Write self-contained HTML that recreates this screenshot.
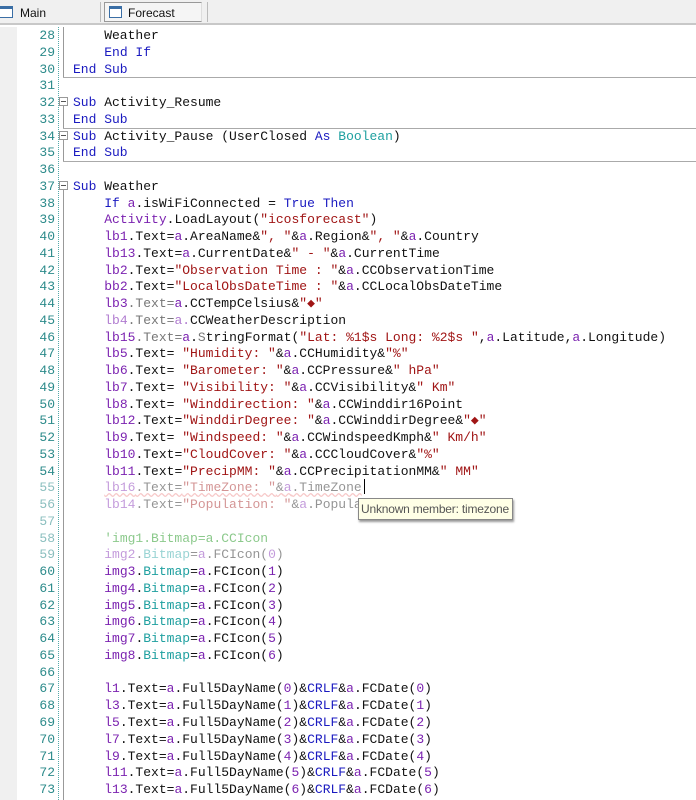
<!DOCTYPE html>
<html><head><meta charset="utf-8"><style>
*{margin:0;padding:0;box-sizing:border-box}
body{width:696px;height:800px;overflow:hidden;background:#fff;font-family:"Liberation Mono",monospace;font-size:13px;position:relative}
#tabs{position:absolute;left:0;top:0;width:696px;height:25px;background:#f0f0f0;border-bottom:2px solid #c8c8c8;font-family:"Liberation Sans",sans-serif;font-size:12px;color:#111}
.ic{position:absolute;width:13px;height:12px;border:1px solid #3a6ea5;border-top:3px solid #3a6ea5;background:#fff}
#gut{position:absolute;left:0;top:27px;width:17px;height:773px;background:#f0f0f0}
#dot{position:absolute;left:58px;top:27px;height:773px;border-left:1px dotted #5aa;}
.ln{position:absolute;left:17px;width:38px;text-align:right;color:#2b8a8a;height:17px;line-height:17px}
.cd{position:absolute;left:73px;white-space:pre;height:17px;line-height:17px;color:#111}
.k{color:#1a1ac0}.v{color:#7b22b0}.s{color:#a01515}.t{color:#1fa0a0}.g{color:#777}
.f{opacity:.45}
.fold{position:absolute;left:59px;width:9px;height:9px;border:1px solid #999;background:#fff}
.fold:after{content:"";position:absolute;left:1px;top:3px;width:5px;height:1px;background:#555}
.vl{position:absolute;left:63px;border-left:1px solid #999}
.hl{position:absolute;left:63px;right:0;border-top:1px solid #aaa}
</style></head><body>
<div id="tabs">
<div class="ic" style="left:0;top:6px;border-left:none"></div>
<div style="position:absolute;left:20px;top:6px">Main</div>
<div style="position:absolute;left:100px;top:2px;height:20px;border-left:1px solid #bbb"></div>
<div style="position:absolute;left:104px;top:2px;width:98px;height:20px;border:1px solid #999;border-right-color:#ddd;background:#f5f5f5"></div>
<div class="ic" style="left:109px;top:6px"></div>
<div style="position:absolute;left:128px;top:6px">Forecast</div>
<div style="position:absolute;left:207px;top:2px;height:20px;border-left:1px solid #bbb"></div>
</div>
<div id="gut"></div>
<div id="dot"></div>
<div class="vl" style="top:27px;height:50px"></div>
<div class="hl" style="top:77px"></div>
<div class="vl" style="top:102px;height:26px"></div>
<div class="hl" style="top:128px"></div>
<div class="vl" style="top:136px;height:26px"></div>
<div class="hl" style="top:161px"></div>
<div class="vl" style="top:190px;height:610px"></div>
<div class="fold" style="top:97px"></div>
<div class="fold" style="top:131px"></div>
<div class="fold" style="top:181px"></div>
<div id="code"></div>
<div style="position:absolute;left:358px;top:498px;width:155px;height:22px;border:1px solid #888;background:#ffffe6;font-family:'Liberation Sans',sans-serif;font-size:12px;letter-spacing:-0.2px;color:#555;line-height:20px;padding-left:2px;box-shadow:1px 2px 2px #999;white-space:nowrap;overflow:hidden">Unknown member: timezone</div>
<div style="position:absolute;left:364px;top:479px;height:15px;border-left:1px solid #000"></div>
<script>
var L={
28:'    Weather',
29:'    <span class=k>End If</span>',
30:'<span class=k>End Sub</span>',
31:'',
32:'<span class=k>Sub</span> Activity_Resume',
33:'<span class=k>End Sub</span>',
34:'<span class=k>Sub</span> Activity_Pause (UserClosed <span class=k>As</span> <span class=t>Boolean</span>)',
35:'<span class=k>End Sub</span>',
36:'',
37:'<span class=k>Sub</span> Weather',
38:'    <span class=k>If</span> <span class=v>a</span>.isWiFiConnected = <span class=k>True Then</span>',
39:'    <span class=v>Activity</span>.LoadLayout(<span class=s>"icosforecast"</span>)',
40:'    <span class=v>lb1</span>.Text=<span class=v>a</span>.AreaName&amp;<span class=s>", "</span>&amp;<span class=v>a</span>.Region&amp;<span class=s>", "</span>&amp;<span class=v>a</span>.Country',
41:'    <span class=v>lb13</span>.Text=<span class=v>a</span>.CurrentDate&amp;<span class=s>" - "</span>&amp;<span class=v>a</span>.CurrentTime',
42:'    <span class=v>lb2</span>.Text=<span class=s>"Observation Time : "</span>&amp;<span class=v>a</span>.CCObservationTime',
43:'    <span class=v>bb2</span>.Text=<span class=s>"LocalObsDateTime : "</span>&amp;<span class=v>a</span>.CCLocalObsDateTime',
44:'    <span class=v>lb3</span><span class=g>.Text=</span><span class=v>a</span>.CCTempCelsius&amp;<span class=s>"\u25c6"</span>',
45:'    <span class=v style="opacity:.6">lb4</span><span class=g>.Text=</span><span class=v style="opacity:.6">a.</span>CCWeatherDescription',
46:'    <span class=v>lb15</span><span class=g>.Text=</span><span class=v>a</span>.<span class=g>S</span>tringFormat(<span class=s>"Lat: %1$s Long: %2$s "</span>,<span class=v>a</span>.Latitude,<span class=v>a</span>.Longitude)',
47:'    <span class=v>lb5</span>.Text= <span class=s>"Humidity: "</span>&amp;<span class=v>a</span>.CCHumidity&amp;<span class=s>"%"</span>',
48:'    <span class=v>lb6</span>.Text= <span class=s>"Barometer: "</span>&amp;<span class=v>a</span>.CCPressure&amp;<span class=s>" hPa"</span>',
49:'    <span class=v>lb7</span>.Text= <span class=s>"Visibility: "</span>&amp;<span class=v>a</span>.CCVisibility&amp;<span class=s>" Km"</span>',
50:'    <span class=v>lb8</span>.Text= <span class=s>"Winddirection: "</span>&amp;<span class=v>a</span>.CCWinddir16Point',
51:'    <span class=v>lb12</span>.Text=<span class=s>"WinddirDegree: "</span>&amp;<span class=v>a</span>.CCWinddirDegree&amp;<span class=s>"\u25c6"</span>',
52:'    <span class=v>lb9</span>.Text= <span class=s>"Windspeed: "</span>&amp;<span class=v>a</span>.CCWindspeedKmph&amp;<span class=s>" Km/h"</span>',
53:'    <span class=v>lb10</span>.Text=<span class=s>"CloudCover: "</span>&amp;<span class=v>a</span>.CCCloudCover&amp;<span class=s>"%"</span>',
54:'    <span class=v>lb11</span>.Text=<span class=s>"PrecipMM: "</span>&amp;<span class=v>a</span>.CCPrecipitationMM&amp;<span class=s>" MM"</span>',
55:'    <span class=f style="text-decoration:underline wavy #e88"><span class=v>lb16</span>.Text=<span class=s>"TimeZone: "</span>&amp;<span class=v>a</span>.TimeZone</span>',
56:'    <span class=f><span class=v>lb14</span>.Text=<span class=s>"Population: "</span>&amp;<span class=v>a</span>.Popula</span>',
57:'',
58:'    <span class=f style="color:#080">\'img1.Bitmap=a.CCIcon</span>',
59:'    <span class=f><span class=v>img2</span>.<span class=t>Bitmap</span>=<span class=v>a</span>.FCIcon(<span class=v>0</span>)</span>',
66:'',
};
for(var i=3;i<=8;i++)L[57+i]='    <span class=v>img'+i+'</span>.<span class=t>Bitmap</span>=<span class=v>a</span>.FCIcon(<span class=v>'+(i-2)+'</span>)';
var ls=['l1','l3','l5','l7','l9','l11','l13'];
for(var j=0;j<7;j++)L[67+j]='    <span class=v>'+ls[j]+'</span>.Text=<span class=v>a</span>.Full5DayName(<span class=v>'+j+'</span>)&amp;<span class=k>CRLF</span>&amp;<span class=v>a</span>.FCDate(<span class=v>'+j+'</span>)';
var h='';
for(var n=28;n<=73;n++){var t=(27+(n-28)*16.756).toFixed(2);
var fd=(n>=55&&n<=59)?' style="top:'+t+'px;opacity:.55"':' style="top:'+t+'px"';
h+='<div class=ln'+fd+'>'+n+'</div><div class=cd style="top:'+t+'px">'+(L[n]||'')+'</div>';}
document.getElementById('code').innerHTML=h;
</script>
</body></html>
